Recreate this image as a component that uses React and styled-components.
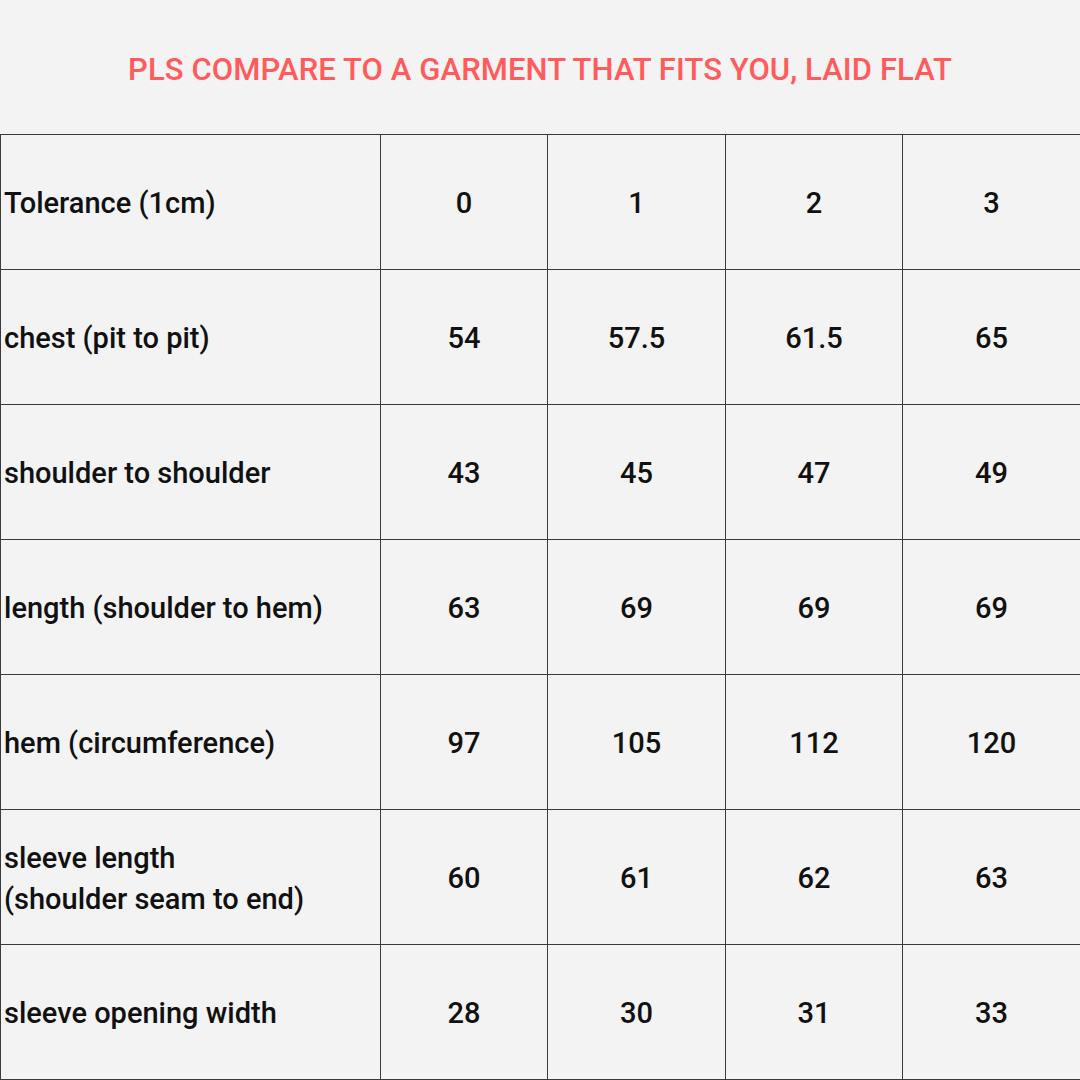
import React from "react";
import styled, { createGlobalStyle } from "styled-components";

const Global = createGlobalStyle`
  html, body { margin: 0; padding: 0; background: #f3f3f3; }
  body { width: 1080px; height: 1080px; overflow: hidden; font-family: Roboto, "Liberation Sans", sans-serif; }
`;

const Page = styled.div`
  width: 1080px;
  height: 1080px;
  background: #f3f3f3;
  display: flex;
  flex-direction: column;
`;

const Title = styled.h1`
  margin: 0;
  height: 135px;
  display: flex;
  align-items: center;
  justify-content: center;
  color: #ff5b5b;
  font-size: 31px;
  font-weight: 500;
  letter-spacing: 0.1px;
  padding-top: 4px;
  box-sizing: border-box;
`;

const Grid = styled.div`
  display: grid;
  grid-template-columns: 380px 167px 178px 177px 178px;
  grid-auto-rows: 135px;
  border-top: 1px solid #3a3a3a;
  border-left: 1px solid #3a3a3a;
`;

const Cell = styled.div`
  border-right: 1px solid #3a3a3a;
  border-bottom: 1px solid #3a3a3a;
  display: flex;
  flex-direction: column;
  justify-content: center;
  align-items: ${(p) => (p.$label ? "flex-start" : "center")};
  padding-left: ${(p) => (p.$label ? "3px" : "0")};
  padding-top: 3px;
  color: #111;
  font-size: 29px;
  font-weight: 500;
  line-height: 41px;
  box-sizing: border-box;
`;

const rows = [
  ["Tolerance (1cm)", "0", "1", "2", "3"],
  ["chest (pit to pit)", "54", "57.5", "61.5", "65"],
  ["shoulder to shoulder", "43", "45", "47", "49"],
  ["length (shoulder to hem)", "63", "69", "69", "69"],
  ["hem (circumference)", "97", "105", "112", "120"],
  [["sleeve length", "(shoulder seam to end)"], "60", "61", "62", "63"],
  ["sleeve opening width", "28", "30", "31", "33"],
];

export default function App() {
  return (
    <>
      <Global />
      <Page>
        <Title>PLS COMPARE TO A GARMENT THAT FITS YOU, LAID FLAT</Title>
        <Grid>
          {rows.map((r, i) =>
            r.map((c, j) => (
              <Cell key={i + "-" + j} $label={j === 0}>
                {Array.isArray(c) ? c.map((l) => <span key={l}>{l}</span>) : c}
              </Cell>
            ))
          )}
        </Grid>
      </Page>
    </>
  );
}
